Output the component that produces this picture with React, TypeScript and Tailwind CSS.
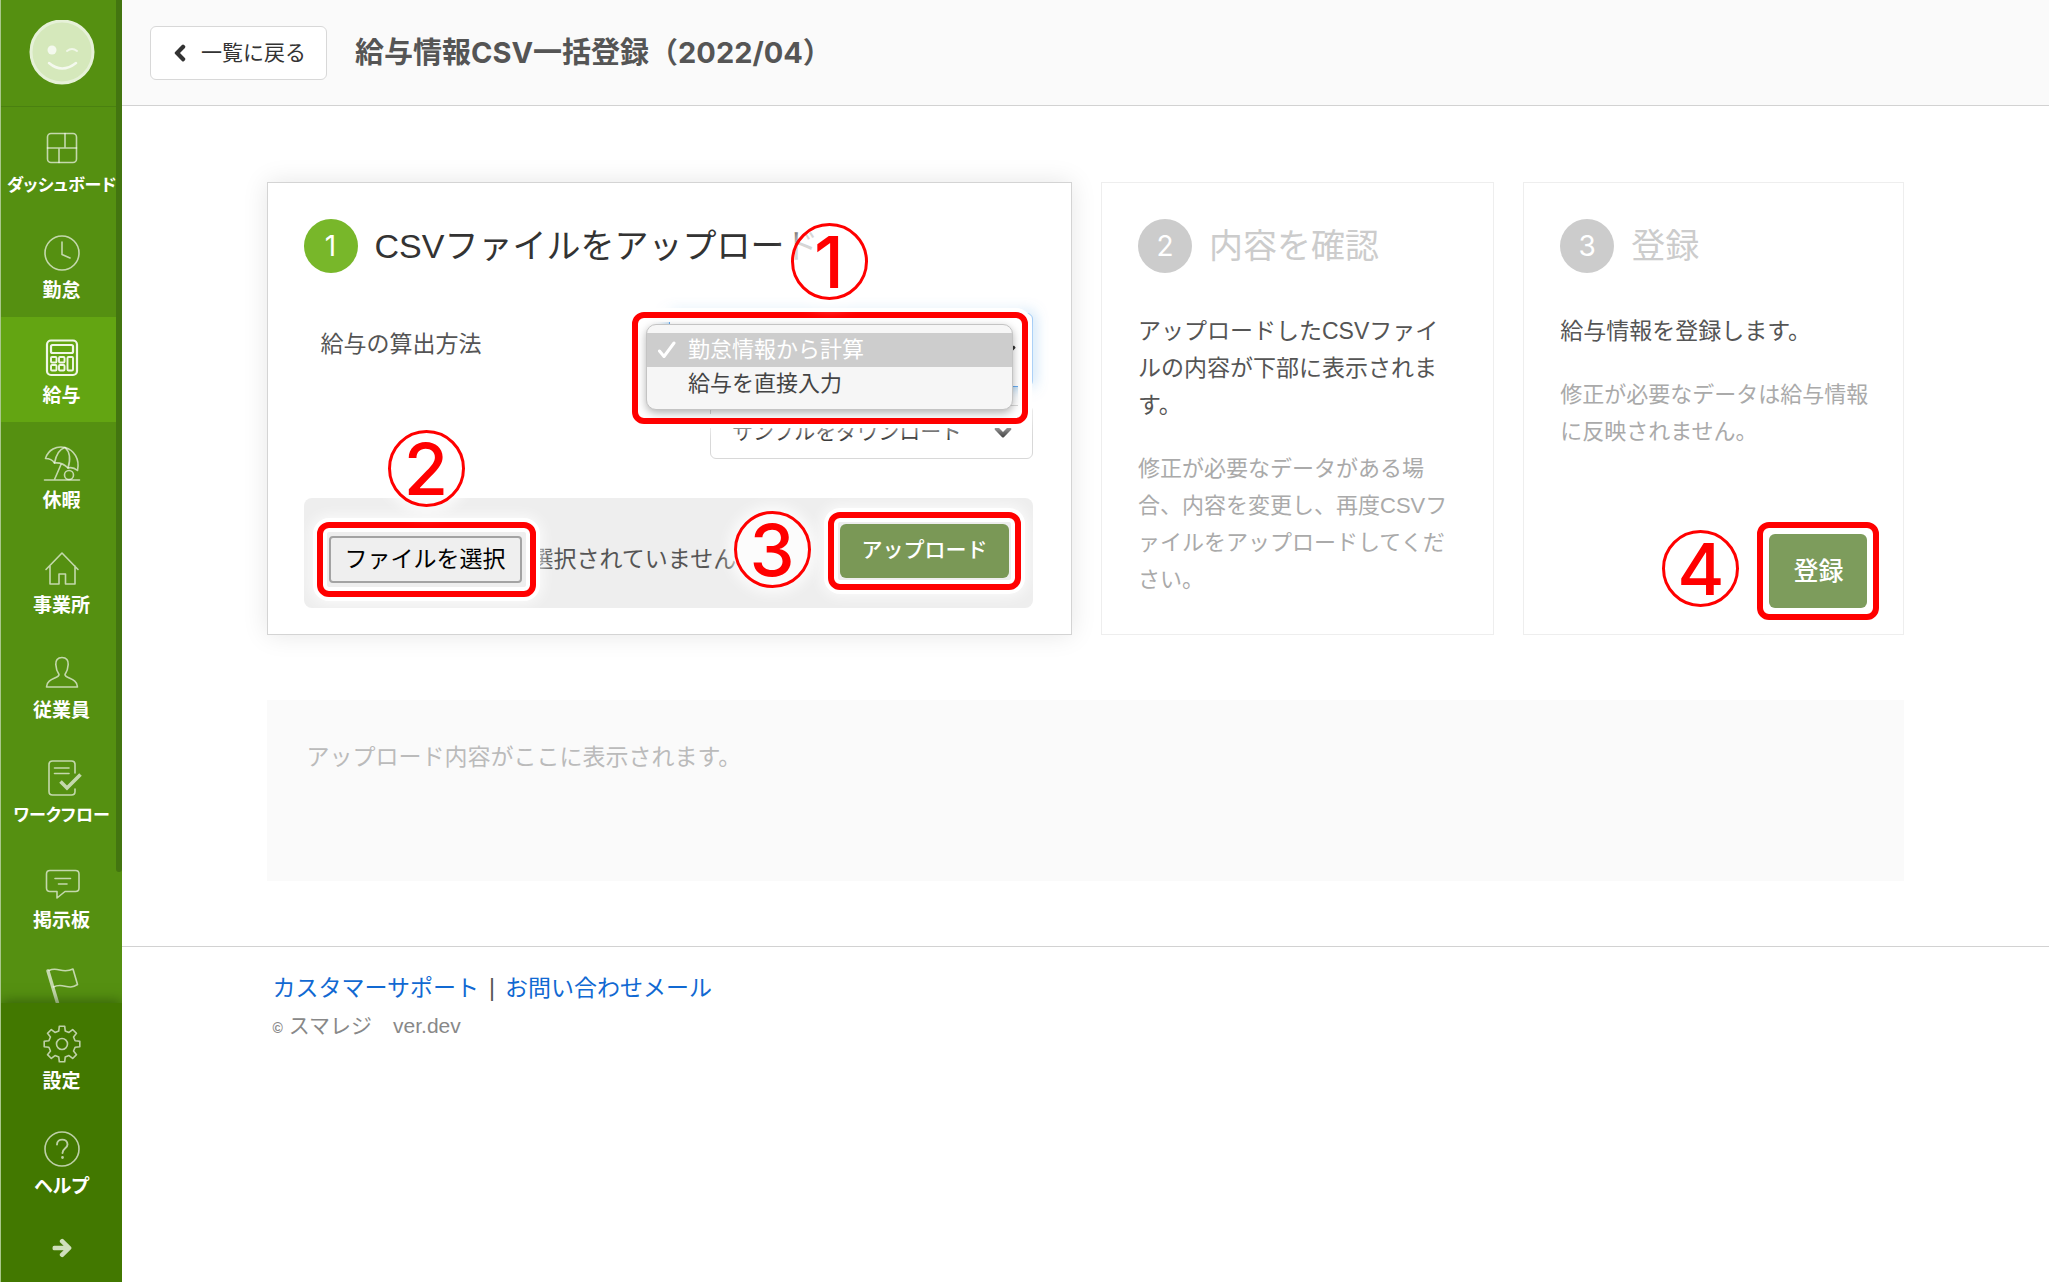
import type { ReactNode } from 'react';
import { FaArrowRight, FaChevronDown, FaChevronLeft } from 'react-icons/fa';

function Icon({ children }: { children: ReactNode }) {
  return (
    <svg
      viewBox="0 0 40 40"
      className="size-10 shrink-0 overflow-visible"
      fill="none"
      stroke="currentColor"
      strokeWidth="1.6"
      strokeLinecap="round"
      strokeLinejoin="round"
      aria-hidden="true"
    >
      {children}
    </svg>
  );
}

function gearPath() {
  const parts: string[] = [];
  for (let i = 0; i < 8; i++) {
    const base = (i * Math.PI) / 4 - Math.PI / 2;
    const points: [number, number][] = [
      [-0.24, 13.5],
      [-0.15, 18],
      [0.15, 18],
      [0.24, 13.5],
    ];
    for (const [offset, radius] of points) {
      const x = 20 + radius * Math.cos(base + offset);
      const y = 20 + radius * Math.sin(base + offset);
      parts.push(`${parts.length ? 'L' : 'M'}${x.toFixed(2)} ${y.toFixed(2)}`);
    }
  }
  return parts.join(' ') + ' Z';
}

const icons = {
  dashboard: (
    <Icon>
      <rect x="5.5" y="5.5" width="29" height="29" rx="3.5" />
      <path d="M5.5 20H34.5M23 5.5V20M17 20V34.5" />
    </Icon>
  ),
  clock: (
    <Icon>
      <circle cx="20" cy="20" r="17" />
      <path d="M20 9V21.5L28 25" />
    </Icon>
  ),
  calculator: (
    <Icon>
      <g strokeWidth="2.2">
        <rect x="5" y="2.5" width="30" height="34.5" rx="4" />
        <rect x="9" y="7" width="22" height="8" rx="1.5" />
      </g>
      <g strokeWidth="1.9">
        <rect x="9" y="19" width="5.5" height="5.5" rx="1" />
        <rect x="17" y="19" width="5.5" height="5.5" rx="1" />
        <rect x="9" y="27" width="5.5" height="5.5" rx="1" />
        <rect x="17" y="27" width="5.5" height="5.5" rx="1" />
        <rect x="25.5" y="19" width="5.5" height="13.5" rx="1" />
      </g>
    </Icon>
  ),
  umbrella: (
    <Icon>
      <path d="M3.5 15.5C6 7 14.5 2.5 23 4.5C32 7 38 16 35.5 27.5Q31 23.5 26 25Q20 19 12.5 20Q9.5 15.5 3.5 15.5Z" />
      <path d="M12.5 20C14 12 18 6 23 4.5C28 9 28.5 17 26 25M19 21.5L12.5 36.5M2.5 37H37.5" />
      <circle cx="27" cy="32" r="4.5" />
    </Icon>
  ),
  house: (
    <Icon>
      <path d="M4 21.5L20 5L36 21.5M8 18V36H17V26H23.5V36H33V18" />
    </Icon>
  ),
  person: (
    <Icon>
      <path d="M20 4.5C15.5 4.5 13.5 7.5 13.8 11.5C14 16 15 18.5 17 21.5C17.5 25.5 4.5 25 4.5 34H35.5C35.5 25 22.5 25.5 23 21.5C25 18.5 26 16 26.2 11.5C26.5 7.5 24.5 4.5 20 4.5Z" />
    </Icon>
  ),
  workflow: (
    <Icon>
      <path d="M33 15V6.5Q33 3 29.5 3H10.5Q7 3 7 6.5V33.5Q7 37 10.5 37H29.5Q33 37 33 33.5V31M12.5 10H27M12.5 15.5H27" />
      <path d="M18.5 23.5L25 30L38.5 16.5" strokeWidth="3.6" strokeLinecap="butt" strokeLinejoin="miter" />
    </Icon>
  ),
  bubble: (
    <Icon>
      <path d="M8 7.5H33.5Q37 7.5 37 11V25Q37 28.5 33.5 28.5H23L15 35V28.5H8Q4.5 28.5 4.5 25V11Q4.5 7.5 8 7.5ZM13 15.5H28.5M16.5 21H25" />
    </Icon>
  ),
  flag: (
    <Icon>
      <path d="M6 6L15.5 38" strokeWidth="3.4" />
      <path d="M7 5.5C16 1 20 9.5 31 4L35.5 19.5C26 26 21 17 11.5 22" />
    </Icon>
  ),
  gear: (
    <Icon>
      <path d={gearPath()} />
      <circle cx="20" cy="20" r="5.5" />
    </Icon>
  ),
  help: (
    <Icon>
      <circle cx="20" cy="20" r="17" />
      <path d="M15 15.5C15 9 25.5 9 25.5 15.5C25.5 19.5 20.5 19 20.5 24" strokeWidth="1.9" />
      <circle cx="20.5" cy="28.5" r="0.7" strokeWidth="1.4" />
    </Icon>
  ),
};

type NavEntry = { label: string; icon: ReactNode; active?: boolean; long?: boolean };

const mainNav: NavEntry[] = [
  { label: 'ダッシュボード', icon: icons.dashboard, long: true },
  { label: '勤怠', icon: icons.clock },
  { label: '給与', icon: icons.calculator, active: true },
  { label: '休暇', icon: icons.umbrella },
  { label: '事業所', icon: icons.house },
  { label: '従業員', icon: icons.person },
  { label: 'ワークフロー', icon: icons.workflow, long: true },
  { label: '掲示板', icon: icons.bubble },
];

function NavItem({ label, icon, active, long }: NavEntry) {
  return (
    <a
      href="#"
      aria-current={active ? 'page' : undefined}
      className={`flex h-[105px] shrink-0 flex-col items-center gap-1.5 pt-[21px] ${active ? 'bg-[#63a512]' : ''}`}
    >
      <span className={active ? 'text-white/90' : 'text-white/65'}>{icon}</span>
      <span
        className={`leading-6 font-bold whitespace-nowrap text-white [font-feature-settings:'palt'] ${long ? 'text-[17px]' : 'text-[19px]'}`}
      >
        {label}
      </span>
    </a>
  );
}

function Sidebar() {
  return (
    <aside className="sticky top-0 flex h-screen w-[122px] shrink-0 flex-col overflow-hidden border-l border-[#a9c78a] bg-[#559011]">
      <div className="relative flex min-h-0 flex-1 flex-col overflow-hidden">
        <div className="flex h-[107px] shrink-0 items-center justify-center border-b border-[#4a8110]">
          <svg viewBox="0 0 66 66" className="size-[66px]" fill="none" role="img" aria-label="スマレジ">
            <circle cx="33" cy="32" r="31" fill="#d5e8bb" stroke="#e6f1d8" strokeWidth="3" />
            <circle cx="23" cy="30" r="4.5" fill="#f4f9ee" />
            <path d="M38 31Q43 27 48 31" stroke="#f1f7e9" strokeWidth="2" strokeLinecap="round" />
            <path d="M20 43Q33 54 47 43" stroke="#f4f9ee" strokeWidth="2.5" strokeLinecap="round" />
          </svg>
        </div>
        <nav className="flex flex-col">
          {mainNav.map((entry) => (
            <NavItem key={entry.label} {...entry} />
          ))}
          <a href="#" aria-label="フラグ" className="flex justify-center pt-[18px] text-white/65">
            {icons.flag}
          </a>
        </nav>
        <div className="absolute top-0 right-0 h-[872px] w-1.5 rounded-b-full bg-[#437510]" />
      </div>
      <nav className="relative flex shrink-0 flex-col bg-[#427800] shadow-[0_-2px_12px_rgba(30,60,0,0.55)]">
        <NavItem label="設定" icon={icons.gear} />
        <NavItem label="ヘルプ" icon={icons.help} />
        <button type="button" aria-label="メニューを広げる" className="flex h-[69px] items-center justify-center text-[#d0dfbd]">
          <FaArrowRight className="size-5 overflow-visible" stroke="currentColor" strokeWidth="36" />
        </button>
      </nav>
    </aside>
  );
}

/* Red highlight frame laid over a control. */
function Frame({ className }: { className: string }) {
  return (
    <span
      aria-hidden="true"
      className={`pointer-events-none absolute rounded-xl border-6 border-[#ff0000] shadow-[0_0_0_4px_#fff,0_0_14px_6px_rgba(255,255,255,0.8),inset_0_0_0_4px_#fff] ${className}`}
    />
  );
}

/* Red numbered marker that points out the order of the steps. */
function Marker({ n, className }: { n: number; className: string }) {
  return (
    <span
      className={`pointer-events-none absolute z-20 flex size-[77px] items-center justify-center rounded-full border-3 border-[#ff0000] bg-white/80 font-['Inter',sans-serif] text-[72px] leading-none font-medium text-[#ff0000] shadow-[0_0_14px_5px_rgba(255,255,255,0.85)] ${className}`}
    >
      {n}
    </span>
  );
}

function StepHeading({ n, title, active }: { n: number; title: string; active?: boolean }) {
  return (
    <div className="flex items-center gap-[17px]">
      <span
        className={`flex size-[54px] shrink-0 items-center justify-center rounded-full font-['Inter',sans-serif] text-[28px] leading-none text-white ${active ? 'bg-[#78b72a]' : 'bg-[#cccccc]'}`}
      >
        {n}
      </span>
      <h2 className={`text-[34px] leading-[54px] whitespace-nowrap ${active ? 'text-[#333333]' : 'text-[#cccccc]'}`}>
        {title}
      </h2>
    </div>
  );
}

const stepCard = 'flex flex-col border bg-white pt-9 pb-[26px] pl-9';

function UploadStep() {
  return (
    <section className={`${stepCard} border-[#d4d4d4] pr-[38px] shadow-[0_0_24px_rgba(0,0,0,0.1)]`}>
      <div className="relative">
        <StepHeading n={1} title="CSVファイルをアップロード" active />
        <Marker n={1} className="top-1 left-[487px]" />
      </div>

      <div className="mt-10 flex items-start justify-between pl-[17px]">
        <label htmlFor="method" className="mt-3 text-[23px] leading-[38px] text-[#555555]">
          給与の算出方法
        </label>
        <div className="relative z-10 w-[364px]">
          <select
            id="method"
            className="h-[74px] w-full appearance-none rounded-md border border-[#66aaf0] bg-white px-5 text-[21px] text-[#333333] shadow-[0_0_14px_rgba(102,175,233,0.7)]"
          >
            <option>勤怠情報から計算</option>
            <option>給与を直接入力</option>
          </select>
          <FaChevronDown className="absolute top-7 right-4 size-5 text-[#333333]" />
          <Frame className="-top-px right-[5px] -left-[37px] h-[112px]" />
          <ul
            role="listbox"
            aria-label="給与の算出方法"
            className="absolute top-[11px] right-5 -left-[23px] rounded-[10px] border border-[#c4c4c4] bg-[#f6f6f6] py-2 text-[22px] leading-[34px] shadow-[0_3px_8px_rgba(0,0,0,0.3)]"
          >
            <li role="option" aria-selected="true" className="flex items-center gap-3 bg-[#cdcdcd] pl-[11px] text-white">
              <svg viewBox="0 0 18 18" className="size-[18px]" fill="none" stroke="currentColor" aria-hidden="true">
                <path d="M1.5 10L6 15.5L16 2" strokeWidth="3" strokeLinecap="round" strokeLinejoin="round" />
              </svg>
              勤怠情報から計算
            </li>
            <li role="option" aria-selected="false" className="pl-[41px] text-[#444444]">
              給与を直接入力
            </li>
          </ul>
        </div>
      </div>

      <button
        type="button"
        className="mt-[18px] flex h-[54px] w-[323px] items-center justify-between self-end rounded-md border border-[#d8d8d8] bg-white pr-5 pl-[21px] text-[21px] text-[#333333]"
      >
        サンプルをダウンロード
        <FaChevronDown className="size-[18px] overflow-visible" stroke="currentColor" strokeWidth="40" />
      </button>

      <div className="relative mt-[39px] flex min-h-[110px] items-start justify-between rounded-lg bg-[#eeeeee] pt-[26px] pr-6 pl-[25px]">
        <div className="mt-3 flex items-center gap-[9px]">
          <div className="relative">
            <input id="csv-file" type="file" className="sr-only" />
            <label
              htmlFor="csv-file"
              className="flex h-[47px] w-[193px] items-center justify-center rounded border-2 border-[#a3a3a3] bg-[#efefef] text-[23px] leading-none text-black"
            >
              ファイルを選択
            </label>
            <Frame className="-top-[14px] -right-[14px] -bottom-[14px] -left-3 z-10" />
          </div>
          <span className="text-[23px] text-[#555555]">選択されていません</span>
        </div>
        <div className="relative">
          <button
            type="button"
            className="h-[54px] w-[169px] rounded-md bg-[#7a9856] pb-1 text-[21px] leading-none font-medium text-white"
          >
            アップロード
          </button>
          <Frame className="-inset-3" />
        </div>
        <Marker n={2} className="-top-[68px] left-[84px]" />
        <Marker n={3} className="top-[13px] left-[430px]" />
      </div>
    </section>
  );
}

function ConfirmStep() {
  return (
    <section className={`${stepCard} border-[#eeeeee] pr-9`}>
      <StepHeading n={2} title="内容を確認" />
      <p className="mt-10 text-[23px] leading-[37px] text-[#555555]">
        アップロードしたCSVファイルの内容が下部に表示されます。
      </p>
      <p className="mt-[26px] text-[22px] leading-[37px] text-[#aaaaaa]">
        修正が必要なデータがある場合、内容を変更し、再度CSVファイルをアップロードしてください。
      </p>
    </section>
  );
}

function RegisterStep() {
  return (
    <section className={`${stepCard} border-[#eeeeee] pr-9`}>
      <StepHeading n={3} title="登録" />
      <p className="mt-10 text-[23px] leading-[37px] text-[#555555]">給与情報を登録します。</p>
      <p className="mt-[26px] -mr-2 text-[22px] leading-[37px] text-[#aaaaaa]">
        修正が必要なデータは給与情報に反映されません。
      </p>
      <div className="relative mt-auto self-end">
        <button
          type="button"
          className="h-[74px] w-[98px] rounded-md bg-[#7d9c5c] text-[25px] leading-none font-medium text-white"
        >
          登録
        </button>
        <Frame className="-inset-3" />
        <Marker n={4} className="-top-1 -left-[107px]" />
      </div>
    </section>
  );
}

export default function App() {
  return (
    <div
      lang="ja"
      className="flex min-h-screen bg-white font-['Liberation_Sans','Noto_Sans_CJK_JP',sans-serif] text-[#555555]"
    >
      <Sidebar />
      <div className="flex min-w-0 flex-1 flex-col">
        <header className="flex h-[106px] items-center gap-7 border-b border-[#d2d2d2] bg-[#fafafa] pl-7">
          <a
            href="#"
            className="flex h-[54px] items-center gap-3 rounded-md border border-[#d8d8d8] bg-white px-5 text-[21px] text-[#333333]"
          >
            <FaChevronLeft className="size-[18px] overflow-visible" stroke="currentColor" strokeWidth="40" />
            一覧に戻る
          </a>
          <h1 className="font-['Inter','Noto_Sans_CJK_JP',sans-serif] text-[29px] font-bold text-[#555555]">
            給与情報CSV一括登録（2022/04）
          </h1>
        </header>

        <main className="mx-auto w-[85%] pt-19">
          <div className="grid grid-cols-[805fr_393fr_381fr] gap-[29px]">
            <UploadStep />
            <ConfirmStep />
            <RegisterStep />
          </div>
          <div className="mt-[65px] min-h-[181px] bg-[#fafafa] px-10 py-[39px] text-[23px] leading-[37px] text-[#bbbbbb]">
            アップロード内容がここに表示されます。
          </div>
        </main>

        <footer className="mt-[65px] border-t border-[#d2d2d2] pt-[27px]">
          <div className="mx-auto w-[85%] pl-1.5">
            <p className="text-[23px] leading-7">
              <a href="#" className="text-[#1169d2]">カスタマーサポート</a>
              <span className="px-2.5">|</span>
              <a href="#" className="text-[#1169d2]">お問い合わせメール</a>
            </p>
            <p className="mt-2.5 text-[21px] leading-7 text-[#888888]">
              <span className="text-sm font-bold">©</span> スマレジ　ver.dev
            </p>
          </div>
        </footer>
      </div>
    </div>
  );
}
